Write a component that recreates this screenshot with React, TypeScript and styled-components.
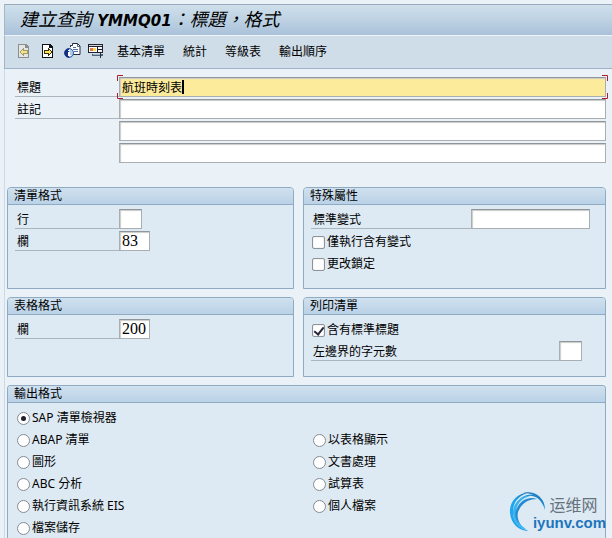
import React from "react";
import styled, { createGlobalStyle } from "styled-components";

const uiFont = '"Noto Sans", "Noto Sans CJK TC", sans-serif';

const GlobalStyle = createGlobalStyle`
  * { box-sizing: border-box; }
  body {
    margin: 0;
    background: #eaf1f7;
    color: #000;
    font-family: ${uiFont};
    font-size: 12px;
    line-height: 16px;
  }
`;

const Page = styled.main`
  position: relative;
  display: flex;
  flex-direction: column;
  min-height: 100vh;
  padding: 4px 0 0 4px;
  overflow: hidden;
`;

const TitleBar = styled.h1`
  margin: 0;
  height: 31px;
  padding-left: 15px;
  border-top: 1px solid #9aa9be;
  border-left: 1px solid #a5b6c9;
  background: linear-gradient(#cfe0ec, #bfd3e3 45%, #a9c1da);
  font: italic 400 18px/26px "Noto Sans CJK TC", sans-serif;
  white-space: pre;
`;

const QueryName = styled.b`
  font: italic 700 15px/26px "DejaVu Sans", sans-serif;
`;

const Toolbar = styled.nav`
  display: flex;
  align-items: center;
  height: 34px;
  padding-left: 8px;
  border-top: 1px solid #eef4f9;
  border-left: 1px solid #a5b6c9;
  border-bottom: 1px solid #9fb3c8;
  background: #cfdde8;
`;

const IconButton = styled.button`
  display: grid;
  place-items: center;
  width: 24px;
  height: 24px;
  padding: 0 2px 2px 0;
  border: 0;
  background: none;
`;

const TextButton = styled.button`
  padding: 0;
  border: 0;
  background: none;
  color: #000;
  font: 12px/16px ${uiFont};
  white-space: nowrap;
`;

const Commands = styled.div`
  display: flex;
  gap: 18px;
  padding-left: 8px;
`;

const Content = styled.form`
  display: flex;
  flex: 1;
  flex-direction: column;
  padding: 8px 6px 0 2px;
  border-left: 1px solid #cdd9e4;
`;

const Fields = styled.div`
  padding-left: 8px;
  margin-bottom: 22px;
`;

const Row = styled.div<{ $end?: number }>`
  display: flex;
  align-items: flex-start;
  height: 22px;
  padding-right: ${(p) => p.$end ?? 0}px;
`;

const Label = styled.label<{ $grow?: boolean }>`
  flex: ${(p) => (p.$grow ? "1" : "0 0 104px")};
  height: 20px;
  padding-left: 2px;
  border-bottom: 1px solid #abb5bd;
  line-height: 22px;
  white-space: nowrap;
`;

const LabelSpace = styled.span`
  flex: 0 0 104px;
`;

const InputBox = styled.span`
  position: relative;
  display: flex;
  flex: 1;
`;

const TextInput = styled.input<{ $width?: number; $active?: boolean }>`
  flex: ${(p) => (p.$width ? `0 0 ${p.$width}px` : "1")};
  width: ${(p) => (p.$width ? `${p.$width}px` : "auto")};
  min-width: 0;
  height: 20px;
  padding: 0 2px;
  border: 1px solid #a9aeb3;
  border-top-color: #8f959a;
  border-radius: 0;
  outline: 0;
  background: ${(p) => (p.$active ? "#fdeb9c" : "#fff")};
  box-shadow: inset 1px 1px 1px #c9cbc9;
  color: #000;
  font: 12px/18px ${uiFont};
`;

const NumberInput = styled(TextInput)`
  font: 16px/18px "Liberation Serif", serif;
`;

const Caret = styled.span`
  position: absolute;
  top: 3px;
  left: 63px;
  width: 2px;
  height: 14px;
  background: #000;
`;

const FocusCorner = styled.svg`
  position: absolute;
  width: 7px;
  height: 7px;
  fill: none;
  stroke: #b01c2c;
  pointer-events: none;
`;

const TopLeft = styled(FocusCorner)`
  top: -2px;
  left: -2px;
`;

const TopRight = styled(FocusCorner)`
  top: -2px;
  right: -2px;
`;

const BottomLeft = styled(FocusCorner)`
  bottom: -2px;
  left: -2px;
`;

const BottomRight = styled(FocusCorner)`
  bottom: -2px;
  right: -2px;
`;

const Groups = styled.div`
  display: grid;
  grid-template-columns: 287fr 303fr;
  grid-template-rows: 102px 80px;
  gap: 8px 9px;
  margin-bottom: 8px;
`;

const Group = styled.fieldset<{ $fill?: boolean }>`
  display: flex;
  flex: ${(p) => (p.$fill ? "1" : "none")};
  flex-direction: column;
  min-width: 0;
  margin: 0;
  padding: 0;
  border: 1px solid #8fabc4;
  border-bottom-width: ${(p) => (p.$fill ? 0 : 1)}px;
  border-radius: 4px 4px 0 0;
  background: #deeaf3;
`;

const GroupTitle = styled.legend`
  float: left;
  width: 100%;
  height: 17px;
  padding: 0 6px;
  border-bottom: 1px solid #8fabc4;
  border-radius: 3px 3px 0 0;
  background: linear-gradient(#d0e1ef, #bad1e7);
  line-height: 16px;
`;

const GroupBody = styled.div`
  padding: 4px 0 0 7px;
`;

const OptionGrid = styled.div`
  display: grid;
  grid-template-columns: 296fr 292fr;
  grid-auto-rows: 22px;
  padding: 4px 0 0 9px;
`;

const Option = styled.label<{ $column?: number; $row?: number }>`
  grid-column: ${(p) => p.$column ?? "auto"};
  grid-row: ${(p) => p.$row ?? "auto"};
  display: flex;
  align-items: center;
  gap: 2px;
  height: 22px;
  white-space: nowrap;
`;

const Tick = styled.input`
  appearance: none;
  display: grid;
  place-items: center;
  width: 13px;
  height: 13px;
  margin: 0 0 0 1px;
  border: 1px solid #8d9399;
  border-radius: 2px;
  background: #fff;
  box-shadow: inset 0 0 1px #9ba1a6;
  &:checked::after {
    content: "";
    width: 4px;
    height: 8px;
    margin-bottom: 2px;
    border: solid #27273d;
    border-width: 0 2px 2px 0;
    transform: rotate(38deg);
  }
`;

const Radio = styled.input`
  appearance: none;
  display: grid;
  place-items: center;
  width: 13px;
  height: 13px;
  margin: 0;
  border: 1px solid #858b91;
  border-radius: 50%;
  background: #fff;
  &:checked::after {
    content: "";
    width: 5px;
    height: 5px;
    border-radius: 50%;
    background: #20202e;
  }
`;

const Watermark = styled.a`
  position: absolute;
  right: 6px;
  bottom: 7px;
  display: flex;
  align-items: flex-end;
  color: #1d76bd;
  text-decoration: none;
`;

const WatermarkText = styled.span`
  display: flex;
  flex-direction: column;
  align-items: center;
  margin-left: -16px;
  font: 700 15px/18px "Liberation Sans", sans-serif;
`;

const WatermarkName = styled.span`
  padding-left: 8px;
  color: #66717c;
  font: 400 16px/20px "Noto Sans CJK SC", sans-serif;
`;

function PageIcon({ back }: { back?: boolean }) {
  const line = back ? "#8b8e8e" : "#11131c";
  return (
    <svg width="14" height="16" viewBox="0 0 14 16" shapeRendering="crispEdges" aria-hidden="true">
      <path d="M1 1h8l3 3v11H1z" fill={back ? "#e3e6e2" : "#fff"} />
      <path d="M1 1h8v1H2v12h10v1H1zM11 5h1v10h-1zM9 1h1v1h1v1h1v2H8V2h1z" fill={line} />
      {back ? (
        <path d="M6 5h1v2h4v4H7v2H6v-1H5v-1H4v-1H3V8h1V7h1V6h1z" fill="#a29b67" />
      ) : (
        <path d="M7 5h1v1h1v1h1v1h1v2h-1v1H9v1H8v1H7v-2H3V7h4z" fill="#33300e" />
      )}
      {back ? (
        <path d="M5 7h1v1h4v2H6v1H5v-1H4V8h1z" fill="#f4e58b" />
      ) : (
        <path d="M8 7h1v1h1v2H9v1H8v-1H4V8h4z" fill="#ffe65a" />
      )}
    </svg>
  );
}

function InfoPagesIcon() {
  return (
    <svg width="17" height="16" viewBox="0 0 17 16" aria-hidden="true">
      <path d="M7 1h7l2 2v9H7z" fill="#fff" />
      <path d="M6.500 4V2.500h2V.500h5l2.500 2.500v8.500H9" fill="none" stroke="#25273d" />
      <path d="M13.500 1v2.500H16" fill="none" stroke="#53617b" />
      <path d="M9 4.500h3M9 6.500h5M10 8.500h4" stroke="#526fa0" />
      <circle cx="5" cy="10" r="4.500" fill="#a9cdec" stroke="#33599a" />
      <path d="M5 5.500a4.500 4.500 0 0 0 0 9z" fill="#152e80" />
      <path d="M4 7h2v1H4zM4 9h2v3h1v1H4z" fill="#fff" />
    </svg>
  );
}

function LayoutIcon() {
  return (
    <svg width="16" height="16" viewBox="0 0 16 16" shapeRendering="crispEdges" aria-hidden="true">
      <path d="M0 1h15v9H0z" fill="#20212c" />
      <path d="M1 2h13v1H1z" fill="#cfd5de" />
      <path d="M1 4h8v5H1z" fill="#fff" />
      <path d="M10 4h4v2h-4zM10 7h4v2h-4z" fill="#f3f5f8" />
      <path d="M2 5h3v3H2z" fill="#df7b42" />
      <path d="M5 5h3v3H5z" fill="#ffd966" />
      <path d="M4 11h11v2H4z" fill="#54627c" />
      <path d="M5 11h7v1H5z" fill="#9db4d0" />
      <path d="M12 10h1v5h-1z" fill="#282d3c" />
    </svg>
  );
}

function SwirlLogo() {
  return (
    <svg width="40" height="41" viewBox="0 0 40 41" aria-hidden="true">
      <defs>
        <linearGradient id="swirl" x1="0" y1="1" x2="1" y2="0">
          <stop offset="0" stopColor="#20a6ee" />
          <stop offset="0.5" stopColor="#20a6ee" />
          <stop offset="1" stopColor="#1565a7" />
        </linearGradient>
      </defs>
      <path d="M21 1C7 2 0 12 1 22C2 33 10 40 20 40C10 37 4 31 4 21C4 11 10 4 21 1z" fill="url(#swirl)" />
      <path d="M25 4C12 4 4 12 4 21C4 31 10 37 18 39C11 34 7 29 7 22C7 12 14 6 25 4z" fill="#38b3ef" />
      <path d="M6 14C12 3 23 1 30 6C34 9 36 13 36 19C33 10 29 6 23 5C16 4 10 8 6 14z" fill="url(#swirl)" />
      <path d="M8 17C12 8 21 5 28 8C21 8 13 11 9 21C8 26 9 30 12 34C6 29 5 23 8 17z" fill="#248bd0" />
      <path d="M14 2C25-1 34 6 35 14C31 6 24 2 14 2z" fill="#2381c3" />
    </svg>
  );
}

const formats = [
  { text: "SAP 清單檢視器", column: 1, row: 1 },
  { text: "ABAP 清單", column: 1, row: 2 },
  { text: "圖形", column: 1, row: 3 },
  { text: "ABC 分析", column: 1, row: 4 },
  { text: "執行資訊系統 EIS", column: 1, row: 5 },
  { text: "檔案儲存", column: 1, row: 6 },
  { text: "以表格顯示", column: 2, row: 2 },
  { text: "文書處理", column: 2, row: 3 },
  { text: "試算表", column: 2, row: 4 },
  { text: "個人檔案", column: 2, row: 5 },
];

export default function App() {
  return (
    <Page>
      <GlobalStyle />
      <TitleBar>
        建立查詢<QueryName> YMMQ01</QueryName>：標題，格式
      </TitleBar>
      <Toolbar>
        <IconButton aria-label="上一頁"><PageIcon back /></IconButton>
        <IconButton aria-label="下一頁"><PageIcon /></IconButton>
        <IconButton aria-label="資訊"><InfoPagesIcon /></IconButton>
        <IconButton aria-label="版面"><LayoutIcon /></IconButton>
        <Commands>
          {["基本清單", "統計", "等級表", "輸出順序"].map((name) => (
            <TextButton key={name}>{name}</TextButton>
          ))}
        </Commands>
      </Toolbar>
      <Content>
        <Fields>
          <Row>
            <Label htmlFor="title">標題</Label>
            <InputBox>
              <TextInput id="title" $active defaultValue="航班時刻表" />
              <Caret />
              <TopLeft viewBox="0 0 7 7"><path d="M.5 6V.5H6" /></TopLeft>
              <TopRight viewBox="0 0 7 7"><path d="M1 .5h5.500V6" /></TopRight>
              <BottomLeft viewBox="0 0 7 7"><path d="M.5 1v5.500H6" /></BottomLeft>
              <BottomRight viewBox="0 0 7 7"><path d="M1 6.500h5.500V1" /></BottomRight>
            </InputBox>
          </Row>
          <Row>
            <Label htmlFor="note">註記</Label>
            <TextInput id="note" />
          </Row>
          <Row>
            <LabelSpace />
            <TextInput aria-label="註記 2" />
          </Row>
          <Row>
            <LabelSpace />
            <TextInput aria-label="註記 3" />
          </Row>
        </Fields>
        <Groups>
          <Group>
            <GroupTitle>清單格式</GroupTitle>
            <GroupBody>
              <Row>
                <Label htmlFor="lines">行</Label>
                <NumberInput id="lines" $width={23} />
              </Row>
              <Row>
                <Label htmlFor="columns">欄</Label>
                <NumberInput id="columns" $width={31} defaultValue="83" />
              </Row>
            </GroupBody>
          </Group>
          <Group>
            <GroupTitle>特殊屬性</GroupTitle>
            <GroupBody>
              <Row $end={15}>
                <Label htmlFor="variant" $grow>標準變式</Label>
                <TextInput id="variant" $width={119} />
              </Row>
              <Row><Option><Tick type="checkbox" />僅執行含有變式</Option></Row>
              <Row><Option><Tick type="checkbox" />更改鎖定</Option></Row>
            </GroupBody>
          </Group>
          <Group>
            <GroupTitle>表格格式</GroupTitle>
            <GroupBody>
              <Row>
                <Label htmlFor="table-columns">欄</Label>
                <NumberInput id="table-columns" $width={31} defaultValue="200" />
              </Row>
            </GroupBody>
          </Group>
          <Group>
            <GroupTitle>列印清單</GroupTitle>
            <GroupBody>
              <Row><Option><Tick type="checkbox" defaultChecked />含有標準標題</Option></Row>
              <Row $end={23}>
                <Label htmlFor="margin" $grow>左邊界的字元數</Label>
                <NumberInput id="margin" $width={23} />
              </Row>
            </GroupBody>
          </Group>
        </Groups>
        <Group $fill>
          <GroupTitle>輸出格式</GroupTitle>
          <OptionGrid>
            {formats.map((f) => (
              <Option key={f.text} $column={f.column} $row={f.row}>
                <Radio type="radio" name="format" defaultChecked={f.row === 1} />
                {f.text}
              </Option>
            ))}
          </OptionGrid>
        </Group>
      </Content>
      <Watermark href="#">
        <SwirlLogo />
        <WatermarkText>
          <WatermarkName>运维网</WatermarkName>
          iyunv.com
        </WatermarkText>
      </Watermark>
    </Page>
  );
}
